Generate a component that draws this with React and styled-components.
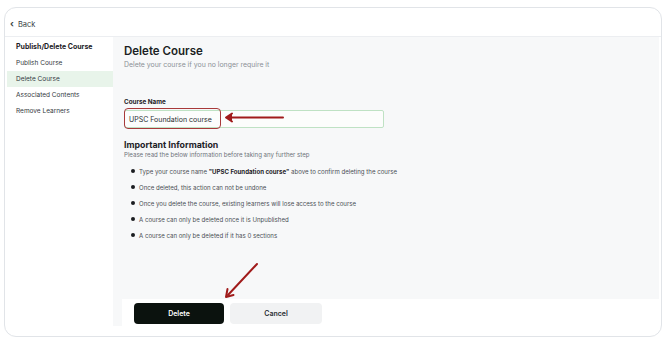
import React from "react";
import styled, { createGlobalStyle } from "styled-components";

const Global = createGlobalStyle`
  html, body { margin: 0; padding: 0; background: #ffffff; }
  body { font-family: Inter, "Noto Sans", sans-serif; color: #1f2329; -webkit-font-smoothing: antialiased; }
  * { box-sizing: border-box; }
`;

const Page = styled.div`
  width: 670px;
  height: 342px;
  padding: 7px 8px 5px 4px;
  position: relative;
`;

const Card = styled.div`
  width: 658px;
  height: 330px;
  border: 1px solid #e1e4e8;
  border-radius: 12px;
  overflow: hidden;
  display: flex;
  flex-direction: column;
  background: #fff;
`;

const Header = styled.div`
  height: 29px;
  flex: none;
  border-bottom: 1px solid #eceef1;
  display: flex;
  align-items: center;
  gap: 4px;
  padding-left: 5px;
  padding-top: 4px;
  font-size: 7.5px;
  color: #3a3f45;
`;

const Chevron = styled.span`
  font-size: 9px;
  font-weight: 700;
  line-height: 1;
  margin-top: -1px;
`;

const Body = styled.div`
  flex: 1;
  display: flex;
  min-height: 0;
`;

const Sidebar = styled.nav`
  width: 108px;
  flex: none;
  padding: 1px 0 0 2px;
  display: flex;
  flex-direction: column;
`;

const SideTitle = styled.div`
  height: 17px;
  display: flex;
  align-items: center;
  padding-left: 9px;
  font-size: 7px;
  font-weight: 700;
  color: #1d2126;
`;

const SideItem = styled.div`
  height: 16px;
  display: flex;
  align-items: center;
  padding-left: 9px;
  font-size: 6.5px;
  color: #33383e;
  background: ${(p) => (p.$active ? "#e8f4ea" : "transparent")};
`;

const Main = styled.main`
  flex: 1;
  display: flex;
  flex-direction: column;
  margin-right: 2px;
`;

const Content = styled.section`
  flex: 1;
  background: #f7f8f9;
  padding: 7px 0 0 11px;
  display: flex;
  flex-direction: column;
`;

const Title = styled.h1`
  margin: 0;
  font-size: 11.5px;
  line-height: 14px;
  font-weight: 600;
  color: #1b1f24;
`;

const Subtitle = styled.p`
  margin: 0;
  margin-top: 2px;
  font-size: 6.9px;
  line-height: 9px;
  color: #8c9197;
`;

const Label = styled.div`
  margin-top: 29px;
  font-size: 6.3px;
  line-height: 8px;
  font-weight: 700;
  color: #1d2126;
`;

const InputWrap = styled.div`
  position: relative;
  margin-top: 4px;
  width: 260px;
  height: 18px;
`;

const Input = styled.div`
  width: 100%;
  height: 100%;
  border: 1px solid #bfe2c4;
  border-radius: 2px;
  background: #fcfdfc;
  display: flex;
  align-items: center;
  padding-left: 4px;
  font-size: 7px;
  color: #2a2e33;
`;

const Highlight = styled.div`
  position: absolute;
  left: 0;
  top: -2px;
  width: 97px;
  height: 21px;
  border: 1.5px solid #a8393a;
  border-radius: 4px;
`;

const SectionTitle = styled.h2`
  margin: 11px 0 0;
  font-size: 8.8px;
  line-height: 11px;
  font-weight: 700;
  color: #1d2126;
`;

const Note = styled.p`
  margin: 0;
  margin-top: 1px;
  font-size: 6.1px;
  line-height: 8px;
  color: #6d7279;
`;

const List = styled.ul`
  list-style: none;
  margin: 4px 0 0;
  padding: 0 0 0 7px;
  display: flex;
  flex-direction: column;
`;

const Item = styled.li`
  height: 16px;
  display: flex;
  align-items: center;
  gap: 4px;
  font-size: 6.1px;
  color: #4a4f55;
  &::before {
    content: "";
    width: 4px;
    height: 4px;
    border-radius: 50%;
    background: #1a1d21;
    flex: none;
  }
  b { color: #1d2126; font-weight: 700; }
`;

const FooterRow = styled.div`
  height: 37px;
  flex: none;
  display: flex;
`;

const Gutter = styled.div`
  width: 9px;
  height: 27px;
  background: #f7f8f9;
`;

const FooterBar = styled.div`
  flex: 1;
  display: flex;
  gap: 6px;
  padding: 4px 0 0 12px;
  align-items: flex-start;
`;

const Button = styled.button`
  width: ${(p) => p.$w}px;
  height: 21px;
  border: none;
  border-radius: 4px;
  font-family: inherit;
  font-size: 7px;
  font-weight: 600;
  background: ${(p) => (p.$primary ? "#0b120e" : "#f1f2f3")};
  color: ${(p) => (p.$primary ? "#ffffff" : "#2a2e33")};
  display: flex;
  align-items: center;
  justify-content: center;
  padding: 0;
`;

const Annotation = styled.svg`
  position: absolute;
  left: 0;
  top: 0;
  pointer-events: none;
`;

export default function App() {
  return (
    <Page>
      <Global />
      <Card>
        <Header>
          <Chevron>‹</Chevron>
          <span>Back</span>
        </Header>
        <Body>
          <Sidebar>
            <SideTitle>Publish/Delete Course</SideTitle>
            <SideItem>Publish Course</SideItem>
            <SideItem $active>Delete Course</SideItem>
            <SideItem>Associated Contents</SideItem>
            <SideItem>Remove Learners</SideItem>
          </Sidebar>
          <Main>
            <Content>
              <Title>Delete Course</Title>
              <Subtitle>Delete your course if you no longer require it</Subtitle>
              <Label>Course Name</Label>
              <InputWrap>
                <Input>UPSC Foundation course</Input>
                <Highlight />
              </InputWrap>
              <SectionTitle>Important Information</SectionTitle>
              <Note>Please read the below information before taking any further step</Note>
              <List>
                <Item>
                  <span>
                    Type your course name <b>"UPSC Foundation course"</b> above to confirm deleting the course
                  </span>
                </Item>
                <Item>Once deleted, this action can not be undone</Item>
                <Item>Once you delete the course, existing learners will lose access to the course</Item>
                <Item>A course can only be deleted once it is Unpublished</Item>
                <Item>A course can only be deleted if it has 0 sections</Item>
              </List>
            </Content>
            <FooterRow>
              <Gutter />
              <FooterBar>
                <Button $primary $w={90}>Delete</Button>
                <Button $w={92}>Cancel</Button>
              </FooterBar>
            </FooterRow>
          </Main>
        </Body>
      </Card>
      <Annotation width="670" height="342" viewBox="0 0 670 342">
        <g stroke="#a01b1b" strokeWidth="2" fill="none" strokeLinecap="round" strokeLinejoin="round">
          <line x1="283" y1="117.5" x2="228" y2="117.5" />
          <polyline points="232,113.5 226,117.5 232,121.5" fill="#a01b1b" />
          <line x1="257" y1="264" x2="228" y2="295" />
          <polyline points="227.5,289 226,297 233.5,295" />
        </g>
      </Annotation>
    </Page>
  );
}
